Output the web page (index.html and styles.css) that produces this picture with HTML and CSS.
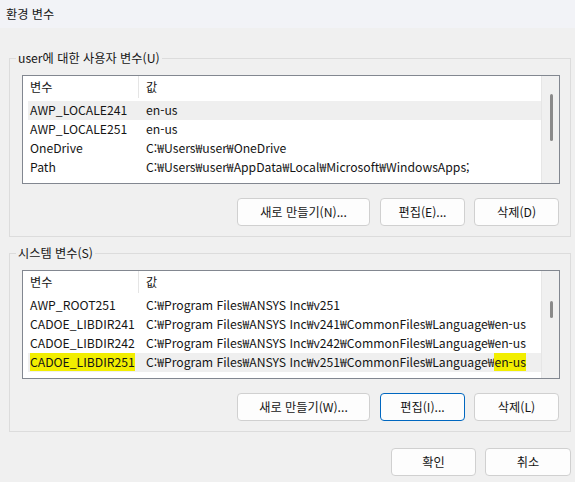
FILE: index.html
```html
<!DOCTYPE html>
<html lang="ko">
<head>
<meta charset="utf-8">
<title>환경 변수</title>
<link rel="stylesheet" href="styles.css">
</head>
<body>
<div class="titlebar">환경 변수</div>
<div class="main">
  <fieldset class="group group-user">
    <legend>user에 대한 사용자 변수(U)</legend>
    <div class="list">
      <div class="list-body">
        <div class="row head"><span class="c1 div">변수</span><span class="c2">값</span></div>
        <div class="row sel"><span class="c1">AWP_LOCALE241</span><span class="c2">en-us</span></div>
        <div class="row"><span class="c1">AWP_LOCALE251</span><span class="c2">en-us</span></div>
        <div class="row"><span class="c1">OneDrive</span><span class="c2">C:₩Users₩user₩OneDrive</span></div>
        <div class="row"><span class="c1">Path</span><span class="c2">C:₩Users₩user₩AppData₩Local₩Microsoft₩WindowsApps;</span></div>
      </div>
      <div class="scroll"><div class="thumb thumb-user"></div></div>
    </div>
    <div class="buttons">
      <button class="btn btn-new">새로 만들기(N)...</button>
      <button class="btn">편집(E)...</button>
      <button class="btn">삭제(D)</button>
    </div>
  </fieldset>
  <fieldset class="group group-sys">
    <legend>시스템 변수(S)</legend>
    <div class="list">
      <div class="list-body">
        <div class="row head"><span class="c1 div">변수</span><span class="c2">값</span></div>
        <div class="row"><span class="c1">AWP_ROOT251</span><span class="c2">C:₩Program Files₩ANSYS Inc₩v251</span></div>
        <div class="row"><span class="c1">CADOE_LIBDIR241</span><span class="c2">C:₩Program Files₩ANSYS Inc₩v241₩CommonFiles₩Language₩en-us</span></div>
        <div class="row"><span class="c1">CADOE_LIBDIR242</span><span class="c2">C:₩Program Files₩ANSYS Inc₩v242₩CommonFiles₩Language₩en-us</span></div>
        <div class="row sel"><span class="c1"><mark>CADOE_LIBDIR251</mark></span><span class="c2">C:₩Program Files₩ANSYS Inc₩v251₩CommonFiles₩Language₩<mark>en-us</mark></span></div>
      </div>
      <div class="scroll"><div class="thumb thumb-sys"></div></div>
    </div>
    <div class="buttons">
      <button class="btn btn-new">새로 만들기(W)...</button>
      <button class="btn focus">편집(I)...</button>
      <button class="btn">삭제(L)</button>
    </div>
  </fieldset>
  <div class="footer">
    <button class="btn">확인</button>
    <button class="btn btn-cancel">취소</button>
  </div>
</div>
</body>
</html>
```
FILE: styles.css
```css
* { box-sizing: border-box; }
html, body {
  margin: 0;
  padding: 0;
  background: #f0f0f0;
  font-family: "Noto Sans CJK KR", "Noto Sans", sans-serif;
  font-size: 12.2px;
  color: #151515;
}
.titlebar {
  height: 28px;
  line-height: 28px;
  padding-left: 6px;
  background: #f2f3f7;
}
.main {
  padding: 0 4px 0 9px;
}
.group {
  margin: 0;
  padding: 9px 10px 10px 12px;
  border: 1px solid #dcdcdc;
  min-width: 0;
}
.group-user { margin-top: 22px; }
.group-sys { margin-top: 8px; }
.group legend {
  margin-left: -6px;
  padding: 0 2px;
  line-height: 16px;
  height: 16px;
}
.list {
  display: flex;
  height: 109px;
  border: 1px solid #828790;
  background: #fff;
}
.list-body {
  flex: 1;
  min-width: 0;
  padding-left: 5px;
  overflow: hidden;
}
.row {
  display: grid;
  grid-template-columns: 111px 1fr;
  height: 19px;
  line-height: 19px;
  white-space: nowrap;
}
.row.head {
  height: 25px;
  line-height: 22px;
}
.row.head .div {
  border-right: 1px solid #e5e5e5;
  height: 22px;
}
.row.sel { background: #efefef; }
.c1 { padding-left: 2px; overflow: hidden; }
.c2 { padding-left: 7px; overflow: hidden; }
mark {
  background: #f2ee00;
  color: inherit;
  padding: 0;
}
.scroll {
  width: 18px;
  flex: none;
  background: #f0f0f0;
  border-left: 1px solid #e6e6e6;
  display: flex;
  justify-content: center;
}
.thumb {
  width: 3px;
  border-radius: 2px;
  background: #8a8a8a;
  margin-left: 1px;
}
.thumb-user { margin-top: 18px; height: 47px; }
.thumb-sys { margin-top: 30px; height: 17px; }
.buttons {
  display: flex;
  justify-content: flex-end;
  gap: 9px;
  margin-top: 14px;
  padding-right: 1px;
}
.btn {
  font: inherit;
  color: #151515;
  height: 28px;
  width: 85px;
  padding: 0;
  background: #fdfdfd;
  border: 1px solid #d0d0d0;
  border-radius: 4px;
  line-height: 26px;
}
.btn-new { width: 133px; margin-right: 1px; }
.btn.focus { border-color: #0067c0; }
.footer {
  display: flex;
  justify-content: flex-end;
  gap: 9px;
  margin-top: 16px;
}
.btn-cancel { width: 86px; }
```
